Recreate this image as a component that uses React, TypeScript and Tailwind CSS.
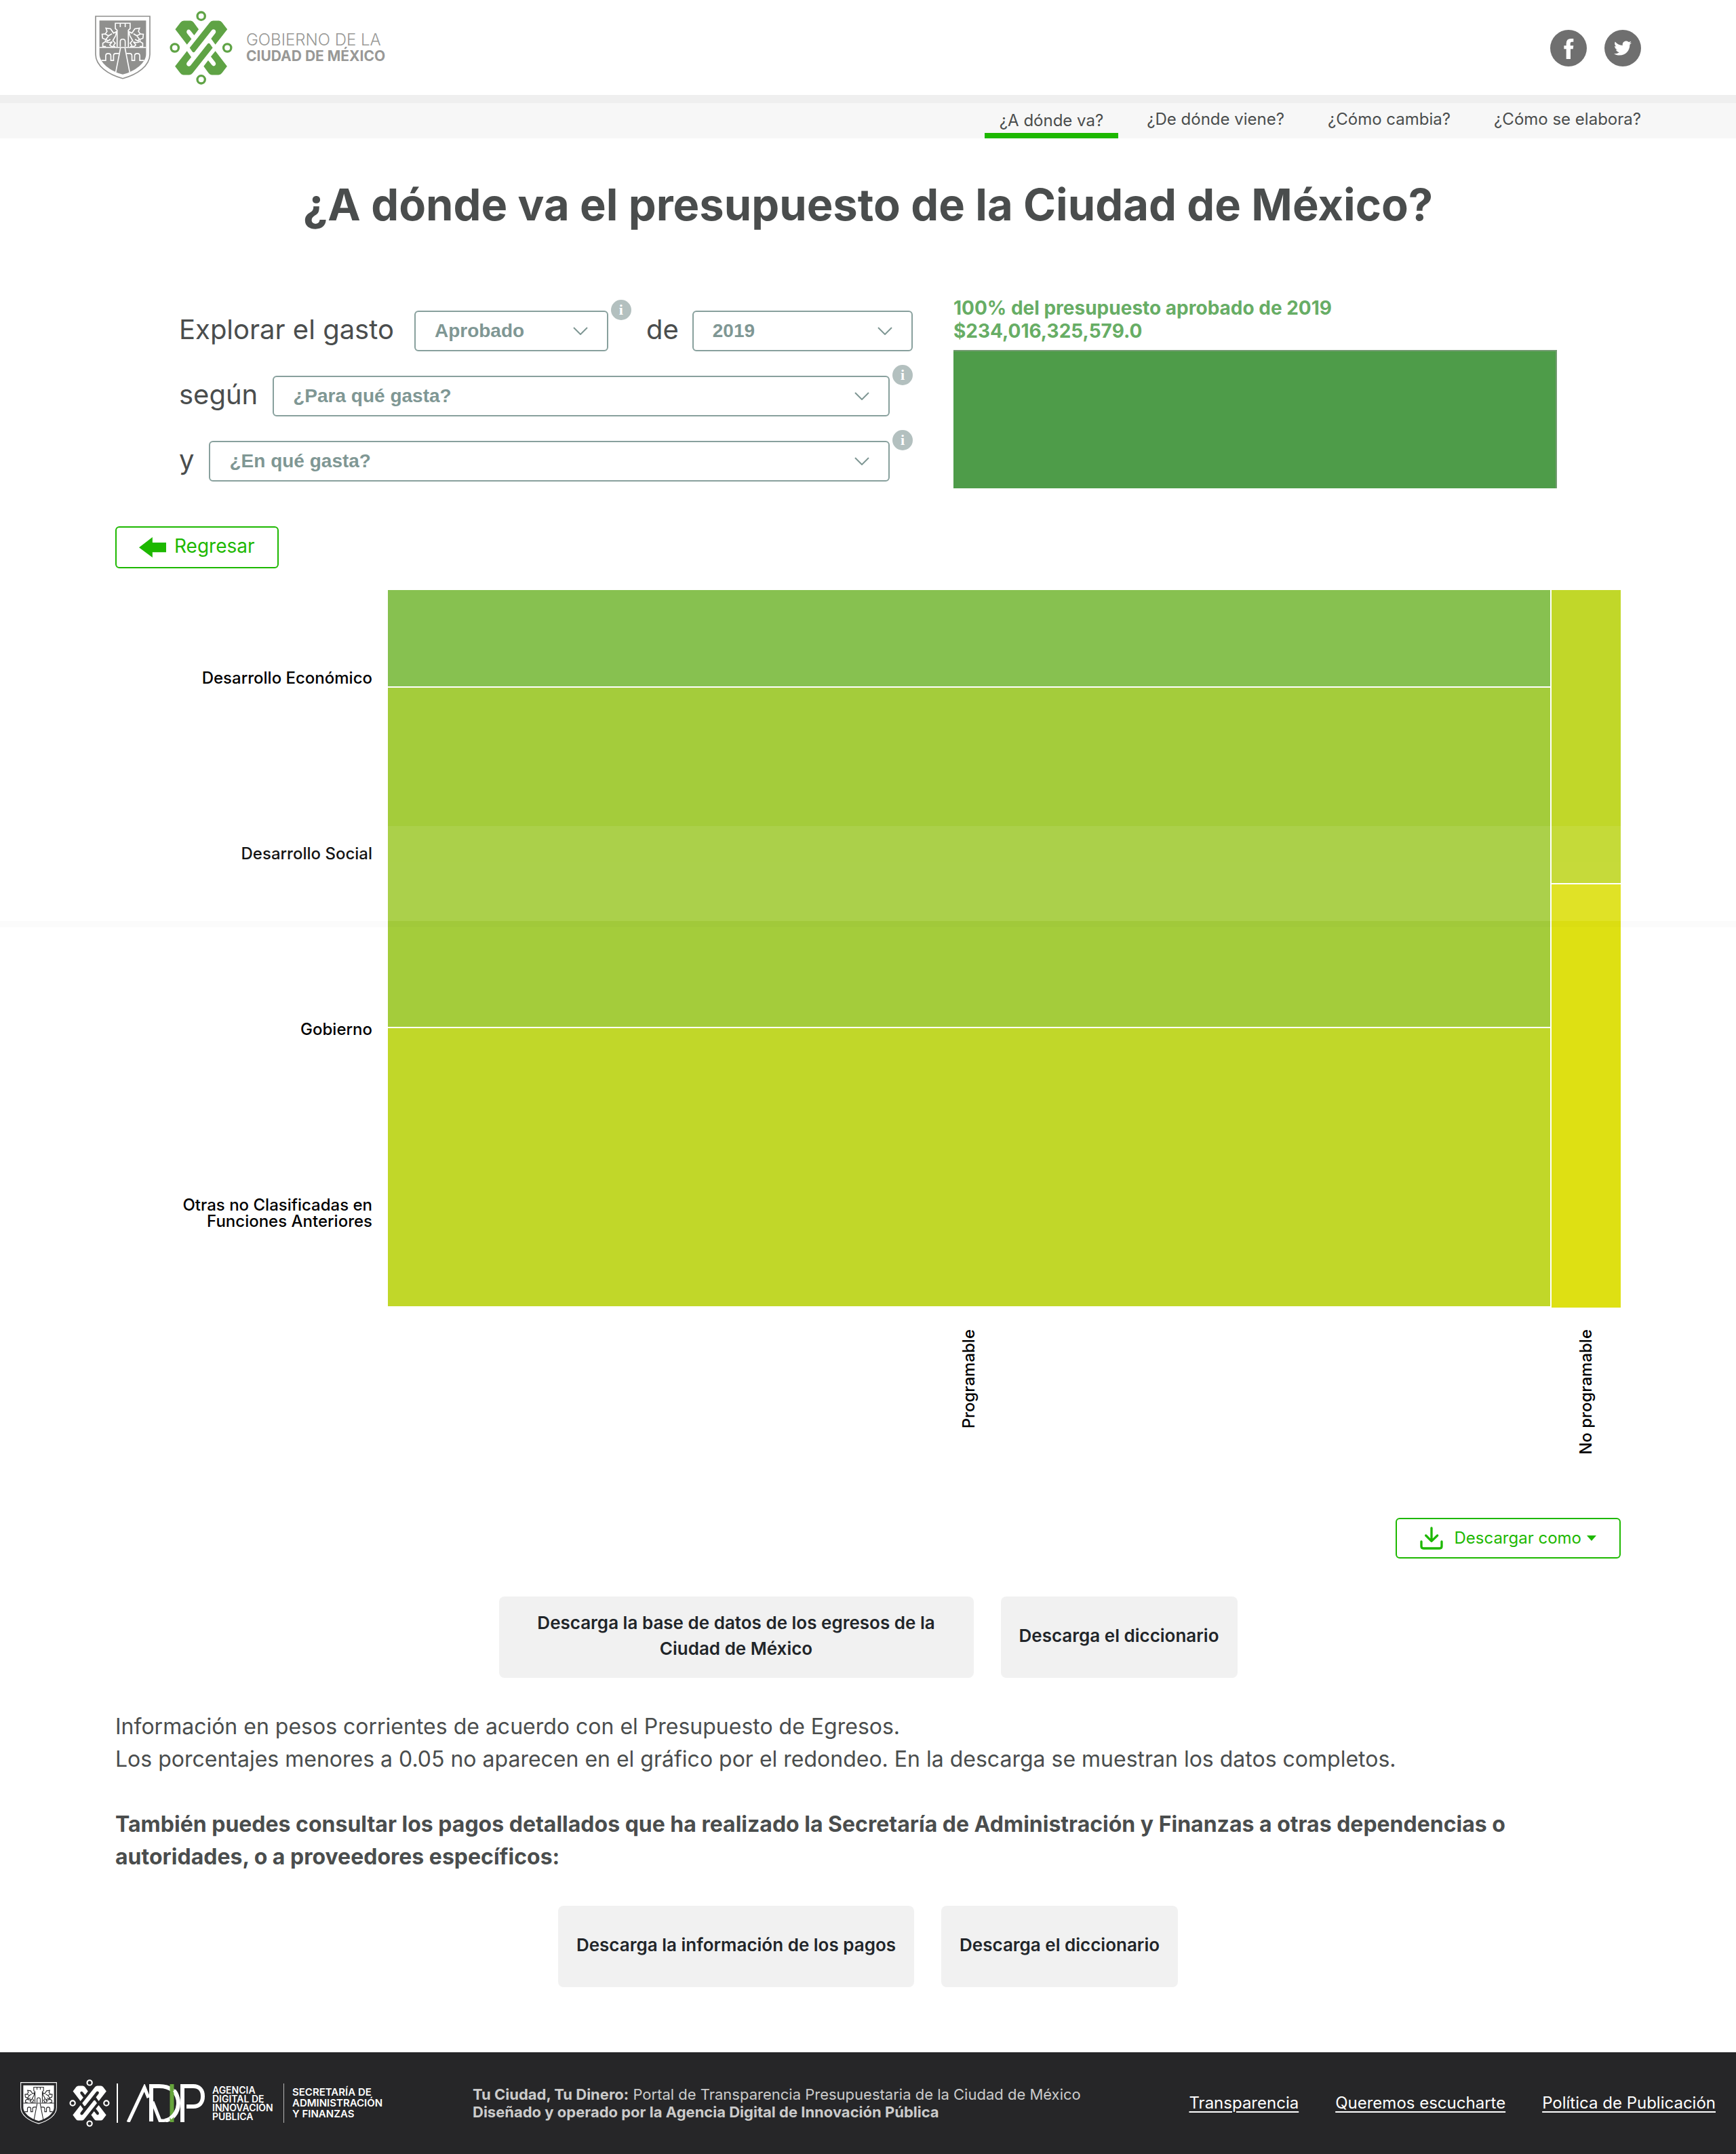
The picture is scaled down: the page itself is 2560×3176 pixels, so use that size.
import React from "react";
import { FaTwitter } from "react-icons/fa";

function LionHalf() {
  return (
    <>
      <path d="M150 206 Q134 206 150 191 L139 179 L151 158 L156 139 L142 146 L129 127 L108 124 L113 138 L105 150 L120 158 L135 149" />
      <path d="M119 160 L110 171 L114 182 L128 174" />
      <path d="M105 150 L91 151 L93 169 L106 174 V184 L94 191 V206 H108 M106 184 Q120 192 136 184 L125 198 Q128 206 141 206" />
    </>
  );
}

function Shield({ fg, bg, className }: { fg: string; bg: string; className: string }) {
  return (
    <svg viewBox="59 68 248 284" className={className} fill="none" aria-hidden="true" preserveAspectRatio="none">
      <path d="M62 71 H304 V240 C304 292 248 330 183 348 C118 330 62 292 62 240 Z" stroke={fg} strokeWidth="5" />
      <path d="M79 90 H287 V240 C287 276 240 316 183 330 C126 316 79 276 79 240 Z" fill={fg} />
      <g stroke={bg} strokeWidth="5">
        <path d="M79 210 H287" />
        <path d="M158 208 V133 L150 126 V102 H216 V126 L208 133 V208 M172 102 V119 M194 102 V119" />
        <path d="M172 206 V184 Q172 173 183 173 Q194 173 194 184 V206" />
        <LionHalf />
        <g transform="matrix(-1 0 0 1 366 0)">
          <LionHalf />
        </g>
        <path d="M173 212 L152 320 M193 212 L214 320" />
        <path d="M88 268 H107 V248 Q107 237 118 237 Q130 237 130 248 V268 H142 V248 Q142 237 152 237 H166" />
        <path d="M278 268 H259 V248 Q259 237 248 237 Q236 237 236 248 V268 H224 V248 Q224 237 214 237 H200" />
      </g>
    </svg>
  );
}

const knotTip =
  "M414 128 L437 98 Q443 90 452 90 H482 Q490 90 496 98 L518 128 L498 154 L481 133 Q473 125 466 133 Q462 139 466 145 L486 171 L466 196 Z";
const knotBand =
  "M478 210 L567 98 Q573 90 582 90 H608 Q616 90 622 98 L645 128 L592 196 L573 169 L591 146 Q597 138 591 131 Q583 125 576 132 L500 228 Q495 233 490 227 Z";

function Knot({ color, className }: { color: string; className: string }) {
  return (
    <svg viewBox="389 46 279 328" className={className} fill={color} aria-hidden="true">
      <path d={knotTip} />
      <path d={knotBand} />
      <g transform="rotate(180 529 210)">
        <path d={knotTip} />
        <path d={knotBand} />
      </g>
      <g fill="none" stroke={color} strokeWidth="10">
        <circle cx="529" cy="69" r="17" />
        <circle cx="529" cy="351" r="17" />
        <circle cx="412" cy="210" r="17" />
        <circle cx="645" cy="210" r="17" />
      </g>
    </svg>
  );
}

function AdipMark() {
  return (
    <svg viewBox="0 0 118 56" className="h-14 w-[118px]" fill="none" stroke="#ffffff" strokeWidth="6" role="img" aria-label="ADIP">
      <path d="M4 56 L28 5 L34 20" strokeWidth="5" strokeLinejoin="miter" />
      <path d="M38 55 V3 H50 C66 3 78 12 78 28 C78 44 68 52 58 54" />
      <path d="M40 26 L51 54 H58" strokeWidth="5" />
      <path d="M68.5 0 V56" stroke="#66a43c" />
      <path d="M72 9 C81 20 80 40 66 50" strokeWidth="5" />
      <path d="M84 56 V3 H100 C109 3 114 9 114 18 C114 27 109 33 100 33 H90" />
    </svg>
  );
}

function InfoButton({ label }: { label: string }) {
  return (
    <button
      type="button"
      aria-label={label}
      className="-mt-4 ml-1 flex size-[30px] shrink-0 items-center justify-center self-start rounded-full bg-[#b3c0bf] font-['Liberation_Serif',serif] text-[22px] font-bold leading-none text-white"
    >
      i
    </button>
  );
}

function Select({ id, options, className }: { id: string; options: string[]; className: string }) {
  return (
    <div className={`relative h-[60px] ${className}`}>
      <select
        id={id}
        className="block size-full appearance-none rounded-md border-2 border-[#88a09d] bg-white pl-7 pr-16 font-['Liberation_Sans',Arial,sans-serif] text-[28px] font-bold text-[#7f9794]"
      >
        {options.map((o) => (
          <option key={o}>{o}</option>
        ))}
      </select>
      <svg viewBox="0 0 22 12" className="pointer-events-none absolute right-[30px] top-6 h-3 w-[22px]" fill="none" stroke="#7f9794" strokeWidth="2" aria-hidden="true">
        <path d="M1 1 L11 11 L21 1" />
      </svg>
    </div>
  );
}

const navItems = ["¿De dónde viene?", "¿Cómo cambia?", "¿Cómo se elabora?"];
const footerLinks = ["Transparencia", "Queremos escucharte", "Política de Publicación"];
const rowLabels = ["Desarrollo Económico", "Desarrollo Social", "Gobierno", "Otras no Clasificadas en Funciones Anteriores"];
const tile = "flex h-[120px] items-center justify-center rounded-lg bg-[#f1f1f1] pb-1 text-center text-[26px] font-semibold leading-[38px] text-[#212529]";

export default function App() {
  return (
    <div className="relative bg-white font-['Inter',sans-serif] text-[#4a4d4d]">
      <header>
        <div className="mx-auto flex h-[140px] max-w-[2280px] items-center">
          <Shield fg="#90908e" bg="#ffffff" className="h-[94px] w-[82px]" />
          <Knot color="#5fa345" className="ml-7 h-[109px] w-[93px]" />
          <p className="ml-5 flex flex-col pt-0.5 leading-6 text-[#989896]">
            <span className="text-2xl font-light leading-6">GOBIERNO DE LA</span>
            <span className="text-[21px] font-bold leading-6">CIUDAD DE MÉXICO</span>
          </p>
          <div className="ml-auto flex gap-[26px] pt-0.5">
            <a href="#facebook" aria-label="Facebook" className="block size-[54px] rounded-full bg-[#6f6f6f]">
              <svg viewBox="48 72 162 162" className="size-full" fill="#ffffff" aria-hidden="true">
                <path d="M119 201 V157 H109 V142 H119 V133 Q119 111 140 111 H151 V125 H144 Q137 125 137 133 V142 H151 L149 157 H138 V201 Z" />
              </svg>
            </a>
            <a href="#twitter" aria-label="Twitter" className="flex size-[54px] items-center justify-center rounded-full bg-[#6f6f6f] text-[26px] text-white">
              <FaTwitter />
            </a>
          </div>
        </div>
        <div className="h-3 bg-[#efefef]" />
        <nav className="h-[52px] bg-[#f7f7f7] text-2xl text-[#4a4d4d]">
          <div className="mx-auto flex max-w-[2280px] justify-end gap-16">
            <a href="#a-donde-va" aria-current="page" className="-mx-[22px] h-[52px] border-b-8 border-[#1db800] px-[22px] pt-1.5 leading-10">
              ¿A dónde va?
            </a>
            {navItems.map((t) => (
              <a key={t} href="#seccion" className="leading-[48px]">
                {t}
              </a>
            ))}
          </div>
        </nav>
      </header>

      <main className="mx-auto max-w-[2220px]">
        <h1 className="mt-[58px] text-center text-[65px] font-bold leading-[80px]">¿A dónde va el presupuesto de la Ciudad de México?</h1>

        <section className="mt-[95px] grid grid-cols-[1082fr_890fr] gap-[60px] px-[94px]">
          <form className="flex flex-col gap-9 pt-[21px] text-[40px] leading-[56px]">
            <div className="flex items-center">
              <label htmlFor="etapa" className="mr-[30px] pb-1">Explorar el gasto</label>
              <Select id="etapa" options={["Aprobado", "Ejercido"]} className="w-[286px]" />
              <InfoButton label="Información sobre la etapa" />
              <label htmlFor="anio" className="ml-[22px] mr-[20px] pb-1">de</label>
              <Select id="anio" options={["2019", "2018"]} className="flex-1" />
            </div>
            <div className="flex items-center">
              <label htmlFor="para-que" className="mr-[22px] pb-1">según</label>
              <Select id="para-que" options={["¿Para qué gasta?"]} className="flex-1" />
              <InfoButton label="Información sobre para qué gasta" />
            </div>
            <div className="flex items-center">
              <label htmlFor="en-que" className="mr-[22px] pb-1">y</label>
              <Select id="en-que" options={["¿En qué gasta?"]} className="flex-1" />
              <InfoButton label="Información sobre en qué gasta" />
            </div>
          </form>
          <div>
            <p className="text-[28px] font-bold leading-[34px] text-[#67ad65]">
              100% del presupuesto aprobado de 2019
              <br />
              $234,016,325,579.0
            </p>
            <div className="mt-[11px] h-[204px] border-r-2 border-t-2 border-[#749a72] bg-[#4e9c49]" />
          </div>
        </section>

        <button type="button" className="mt-14 flex h-[62px] items-center rounded-md border-2 border-[#1db800] px-[33px] text-[28px] text-[#1db800]">
          <svg viewBox="193 159 119 89" className="h-[30px] w-10" fill="currentColor" aria-hidden="true">
            <path d="M193 204 L252 159 V183 H312 V225 H252 V248 Z" />
          </svg>
          <span className="ml-3 pb-1">Regresar</span>
        </button>

        <section className="mt-8 grid grid-cols-[402px_1fr] text-2xl font-medium text-black">
          <ul className="pr-[23px] text-right leading-6">
            {rowLabels.map((t) => (
              <li key={t} className="h-[259px] pl-20 pt-[118px]">
                {t}
              </li>
            ))}
          </ul>
          <div className="grid grid-cols-[1714fr_102fr] gap-x-0.5">
            <div className="flex flex-col gap-0.5">
              <div className="h-[142px] bg-[#87c150]" />
              <div className="h-[500px] bg-[#a4cc3b]" />
              <div className="h-[410px] bg-[#c1d729]" />
            </div>
            <div className="flex flex-col gap-0.5">
              <div className="h-[432px] bg-[#c1d729]" />
              <div className="h-[624px] bg-[#dee013]" />
            </div>
          </div>
          <div className="col-start-2 mt-8 grid min-h-[188px] grid-cols-[1714fr_102fr] items-start justify-items-center gap-x-0.5 leading-6">
            <span className="rotate-180 [writing-mode:vertical-rl]">Programable</span>
            <span className="rotate-180 [writing-mode:vertical-rl]">No programable</span>
          </div>
        </section>

        <button type="button" className="ml-auto mt-[90px] flex h-[60px] items-center rounded-md border-2 border-[#1db800] px-[34px] text-2xl text-[#1db800]">
          <svg viewBox="0 0 102 102" className="size-[34px]" fill="none" stroke="currentColor" strokeWidth="10" strokeLinecap="round" strokeLinejoin="round" aria-hidden="true">
            <path d="M51 6 V62 M26 39 L51 64 L77 39" />
            <path d="M6 66 V87 Q6 96 15 96 H87 Q96 96 96 87 V66" />
          </svg>
          <span className="ml-4">Descargar como</span>
          <svg viewBox="0 0 14 8" className="ml-2 h-2 w-3.5" fill="currentColor" aria-hidden="true">
            <path d="M0 0 H14 L7 8 Z" />
          </svg>
        </button>

        <div className="mt-14 flex justify-center gap-10">
          <a href="#egresos" className={`${tile} w-[700px] px-9`}>Descarga la base de datos de los egresos de la Ciudad de México</a>
          <a href="#diccionario" className={`${tile} px-[27px]`}>Descarga el diccionario</a>
        </div>

        <div className="mt-12 text-[32px] leading-[48px]">
          <p>Información en pesos corrientes de acuerdo con el Presupuesto de Egresos.</p>
          <p>Los porcentajes menores a 0.05 no aparecen en el gráfico por el redondeo. En la descarga se muestran los datos completos.</p>
          <p className="mt-12 font-bold">
            También puedes consultar los pagos detallados que ha realizado la Secretaría de Administración y Finanzas a otras dependencias o autoridades, o a proveedores específicos:
          </p>
        </div>

        <div className="mt-12 flex justify-center gap-10">
          <a href="#pagos" className={`${tile} px-[27px]`}>Descarga la información de los pagos</a>
          <a href="#diccionario-pagos" className={`${tile} px-[27px]`}>Descarga el diccionario</a>
        </div>
      </main>

      <footer className="mt-24 flex h-[150px] items-center bg-[#262628] px-[30px] text-white">
        <Shield fg="#ffffff" bg="#262628" className="h-[62px] w-[54px]" />
        <Knot color="#ffffff" className="ml-[18px] h-[70px] w-[60px]" />
        <div className="ml-2.5 h-[58px] w-0.5 bg-white" />
        <div className="ml-[11px]">
          <AdipMark />
        </div>
        <p className="ml-2.5 w-[95px] text-sm font-semibold leading-[13px]">
          AGENCIA
          <br />
          DIGITAL DE
          <br />
          INNOVACIÓN
          <br />
          PÚBLICA
        </p>
        <div className="ml-2.5 h-[58px] w-px bg-[#b5b5b5]" />
        <p className="ml-3 w-[266px] text-[15px] font-semibold leading-4">
          SECRETARÍA DE
          <br />
          ADMINISTRACIÓN
          <br />
          Y FINANZAS
        </p>
        <p className="text-[22px] leading-[26px] text-[#cbcbcb]">
          <strong>Tu Ciudad, Tu Dinero:</strong> Portal de Transparencia Presupuestaria de la Ciudad de México
          <br />
          <strong>Diseñado y operado por la Agencia Digital de Innovación Pública</strong>
        </p>
        <div className="ml-auto flex gap-[54px] text-2xl">
          {footerLinks.map((t) => (
            <a key={t} href="#enlace" className="underline decoration-2 underline-offset-4">
              {t}
            </a>
          ))}
        </div>
      </footer>

      <div aria-hidden="true" className="pointer-events-none absolute inset-x-0 top-[1218px] opacity-[0.08]">
        <div className="h-[140px] bg-white" />
        <div className="h-[9px] bg-black/15" />
      </div>
    </div>
  );
}
